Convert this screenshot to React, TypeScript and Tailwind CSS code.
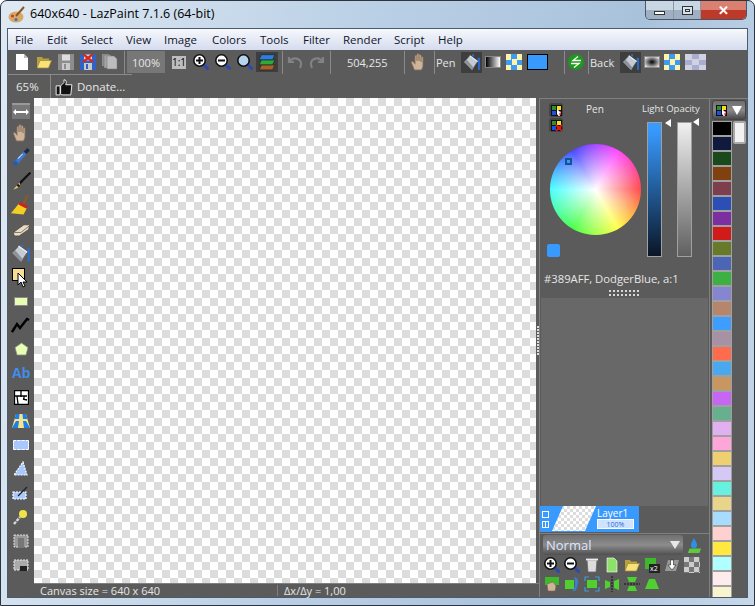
import React from "react";

const font = "font-['Open_Sans','Noto_Sans',sans-serif]";

const palette = [
  "#000000", "#0f1a3d", "#1a4a1c", "#80400f", "#7d3f4d", "#2b4fb5", "#7b2fa0", "#d11a1a",
  "#667a2a", "#4a66b5", "#3cb043", "#8585d1", "#b5866b", "#3d9eff", "#a890a5", "#ff6b4d",
  "#4aa8ee", "#c89660", "#c766f5", "#66b090", "#e0b0f0", "#ffa6d9", "#eed070", "#d5c8f5",
  "#66f0e0", "#e8d48a", "#a8dcff", "#ffd0d0", "#ffe840", "#b0ffff", "#fdebee", "#f8f4d0",
];

const menus = [
  ["File", "w-[32px]"],
  ["Edit", "w-[34px]"],
  ["Select", "w-[45px]"],
  ["View", "w-[38px]"],
  ["Image", "w-[48px]"],
  ["Colors", "w-[48px]"],
  ["Tools", "w-[43px]"],
  ["Filter", "w-[40px]"],
  ["Render", "w-[51px]"],
  ["Script", "w-[44px]"],
  ["Help", "w-[32px]"],
];

function Svg({ children, size = 16, className = "" }: { children: React.ReactNode; size?: number; className?: string }) {
  return (
    <svg width={size} height={size} viewBox="0 0 16 16" className={"shrink-0 " + className}>
      {children}
    </svg>
  );
}

function Sep({ className = "" }: { className?: string }) {
  return <div className={"h-[23px] w-px shrink-0 bg-[#8a8a8a] " + className} />;
}

function NewDoc() {
  return <Svg><path d="M2 0h8l4 4v12H2z" fill="#fff" /><path d="M10 0l4 4h-4z" fill="#bbb" /></Svg>;
}
function Folder() {
  return <Svg><path d="M1 3h5l1 1.500h6V7H4l-2 6H1z" fill="#b8a040" /><path d="M4 6.500h11.500l-3 7.500H1z" fill="#f7e27a" stroke="#a08a30" strokeWidth=".7" /></Svg>;
}
function Save({ crossed = false }: { crossed?: boolean }) {
  const c = crossed ? "#2f62c8" : "#8d8d8d";
  return (
    <Svg>
      <path d="M0 0h16v16H0z" fill={c} />
      <path d="M4 .5h8v6H4z" fill="#ddd" />
      <path d="M4 9h8v7H4z" fill="#c9c9c9" />
      <path d="M6 10h2v5H6z" fill={c} />
      {crossed && <path d="M3 0l10 8M13 0L3 8" stroke="#d6281c" strokeWidth="2.4" />}
    </Svg>
  );
}
function Copy() {
  return <Svg><path d="M0 0h7v12H0z" fill="#8f8f8f" /><path d="M2 1h7v13H2z" fill="#a4a4a4" stroke="#6e6e6e" strokeWidth=".5" /><path d="M5 2h7l3 3v10H5z" fill="#bcbcbc" stroke="#777" strokeWidth=".5" /></Svg>;
}
function Zoom({ sign }: { sign: "+" | "-" | "" }) {
  return (
    <Svg>
      <path d="M11 11l3.500 3.500" stroke="#2c49b0" strokeWidth="3" strokeLinecap="round" />
      <circle cx="6.500" cy="6.500" r="5.700" fill={sign ? "#fff" : "#b8d4ec"} stroke="#111" strokeWidth="1.600" />
      {sign && <path d="M3 6.500h7" stroke="#111" strokeWidth="2" />}
      {sign === "+" && <path d="M6.500 3v7" stroke="#111" strokeWidth="2" />}
    </Svg>
  );
}
function Layers() {
  return (
    <Svg size={18}>
      <path d="M3 10.500h12l-2 4.500H1z" fill="#a8622a" stroke="#222" strokeWidth=".6" />
      <path d="M3 6h12l-2 4.500H1z" fill="#2fa83c" stroke="#222" strokeWidth=".6" />
      <path d="M3 1.500h12L13 6H1z" fill="#2c7fe0" stroke="#222" strokeWidth=".6" />
    </Svg>
  );
}
function Arrow({ flip = false }: { flip?: boolean }) {
  return (
    <Svg className={flip ? "-scale-x-100" : ""}>
      <path d="M2 3v5h5M2.500 8C4 4.500 8 3.500 11 5s4 5 2 9" fill="none" stroke="#828282" strokeWidth="2.200" />
    </Svg>
  );
}
function Hand() {
  return (
    <Svg size={18}>
      <path d="M4 15L1.500 9c-.5-1.500 1-2 1.600-1L4.500 10V3c0-1 1.700-1 1.700 0v4V1.500c0-1 1.800-1 1.800 0V7V2.200c0-1 1.800-1 1.800 0V8V4c0-1 1.700-1 1.700 0v7c0 2-1 3-1.500 4z" fill="#cdb49a" stroke="#8f7660" strokeWidth=".7" />
    </Svg>
  );
}
function Bucket({ size = 18 }: { size?: number }) {
  return (
    <Svg size={size}>
      <path d="M1 8l5-5.500 7 5L8 15z" fill="#c4cbd2" stroke="#555" strokeWidth=".5" />
      <path d="M1 8l7 7 1.500-2-6-7z" fill="#8d949b" />
      <path d="M6 2.500l7 5" stroke="#eef2f6" strokeWidth="1" />
      <path d="M9 3V1.200M13 5h1.200v10" fill="none" stroke="#2a6fd8" strokeWidth="1.600" />
    </Svg>
  );
}
function Checker({ className = "" }: { className?: string }) {
  return <div className={"size-[16px] shrink-0 bg-[repeating-conic-gradient(#3b9bf5_0_25%,#fff3a8_0_50%)] bg-[length:11px_11px] " + className} />;
}
function Button({ children }: { children: React.ReactNode }) {
  return <div className="flex size-[21px] shrink-0 items-center justify-center bg-[#3e3e3e]">{children}</div>;
}
function Swap() {
  return (
    <Svg>
      <circle cx="8" cy="8" r="7.900" fill="#1d9a1d" />
      <path d="M10 2.500L5 6.500h8M6 13.500l5-4H3" fill="none" stroke="#fff" strokeWidth="1.300" />
    </Svg>
  );
}
function Thumb() {
  return (
    <Svg size={18}>
      <path d="M1 7h3.500v8H1z" fill="#111" stroke="#fff" strokeWidth=".8" />
      <path d="M5 7l3-3V1.500c2 0 2.500 2 1.500 4.500H15l-1 9H6l-1-1z" fill="#111" stroke="#fff" strokeWidth=".8" />
    </Svg>
  );
}
function ColorsIcon({ crossed = false }: { crossed?: boolean }) {
  return (
    <svg width="11" height="11" viewBox="0 0 11 11" className="shrink-0">
      <path d="M0 0h11v11H0z" fill="#111" />
      <path d="M1 1h4v4H1z" fill="#2f8f2f" />
      <path d="M6 1h4v4H6z" fill="#f2e020" />
      <path d="M1 6h4v4H1z" fill="#1f4fe0" />
      <path d="M6 6h4v4H6z" fill="#e02020" />
      {crossed && <path d="M5 5l6 6M11 5l-6 6" stroke="#e01515" strokeWidth="1.800" />}
      {!crossed && <path d="M6 4l4 4-2 .5 1 2.500H7.500L6.500 9 6 10z" fill="#fff" />}
    </svg>
  );
}

const Tools = [
  <div key="a" className="flex h-[16px] w-[18px] items-center justify-center border-t-2 border-[#999] bg-[#777]">
    <svg width="16" height="10" viewBox="0 0 16 10"><path d="M0 5l3-3v2h10V2l3 3-3 3V6H3v2z" fill="#fff" /></svg>
  </div>,
  <Hand key="b" />,
  <Svg key="c" size={19}>
    <path d="M3 13L11 4" stroke="#3d78d0" strokeWidth="3.400" />
    <path d="M11 4l3-3" stroke="#1d2a44" strokeWidth="3" />
    <path d="M5 9l4-4" stroke="#bcd4f5" strokeWidth="1" />
    <circle cx="3" cy="13" r="2" fill="#2a5ab0" />
  </Svg>,
  <Svg key="d" size={19}>
    <path d="M15.500 .5L6 10" stroke="#111" strokeWidth="1.800" />
    <path d="M6.500 8.500L1 15l6-2.500z" fill="#e0c070" />
    <path d="M4.500 10.500L6.500 12.500" stroke="#222" strokeWidth="2" />
  </Svg>,
  <Svg key="e" size={20}>
    <path d="M6.500 6.500L0 14.500l10 1 3-5.500z" fill="#f4cf20" />
    <path d="M6.500 6.500l6.500 3.500" stroke="#d02020" strokeWidth="2.400" />
    <path d="M10 7l3.500-7" stroke="#8a5a20" strokeWidth="1.800" />
  </Svg>,
  <Svg key="f" size={19}>
    <path d="M1 10.500L10 4h5l-1 4-8 5.500H2z" fill="#e6dcc8" stroke="#5a5040" strokeWidth=".8" />
    <path d="M1.500 10.500h6L14.500 5" fill="none" stroke="#5a5040" strokeWidth=".6" />
  </Svg>,
  <Bucket key="g" size={20} />,
  <div key="h" className="relative size-[20px]">
    <div className="absolute left-[1px] top-[1px] size-[13px] border border-black bg-[#f8df93]" />
    <svg width="12" height="16" viewBox="0 0 12 16" className="absolute left-[6px] top-[5px]"><path d="M1 1v12l3-3 2 5 2-1-2-4h4z" fill="#fff" stroke="#000" strokeWidth="1" /></svg>
  </div>,
  <div key="i" className="h-[9px] w-[14px] border border-[#888] bg-[#e6ffb3]" />,
  <svg key="j" width="20" height="18" viewBox="0 0 20 18"><path d="M1 16l5-8 3 4 7-9 2 1" fill="none" stroke="#000" strokeWidth="2.400" /></svg>,
  <svg key="k" width="15" height="14" viewBox="0 0 15 14"><path d="M7.500 1L14 5.500 12 13H3L1 5.500z" fill="#e6ffb3" stroke="#888" strokeWidth=".8" /></svg>,
  <span key="l" className="font-['Liberation_Sans',sans-serif] text-[14px] font-bold leading-none text-[#3f8ff0]">Ab</span>,
  <svg key="m" width="15" height="15" viewBox="0 0 15 15"><path d="M0 0h15v15H0z" fill="#fff" /><path d="M.5.500h14v14H.5zM7 1v6M1 6h12M10 6v3M3 6l1 8M9 9l4 1" fill="none" stroke="#000" strokeWidth="1.300" /></svg>,
  <svg key="n" width="20" height="16" viewBox="0 0 20 16"><path d="M5 1h10l4 14H1z" fill="#f4e48a" /><path d="M1 15l4-7h3l-1 7zM19 15l-4-7h-3l1 7zM5 1h3.500l-.5 5H3.500zM11.500 1H15l1.500 5H12z" fill="#1e7fe8" /></svg>,
  <div key="o" className="h-[10px] w-[16px] rounded-[1px] border border-dashed border-white bg-[#a8c8ff]" />,
  <svg key="p" width="16" height="16" viewBox="0 0 16 16"><path d="M10 1l4 13H1z" fill="#a8c8ff" stroke="#fff" strokeWidth="1.200" strokeDasharray="2 1" /></svg>,
  <svg key="q" width="18" height="16" viewBox="0 0 18 16"><path d="M1 7h13v7H1z" fill="#a8c8ff" stroke="#fff" strokeWidth="1.200" strokeDasharray="2 1" /><path d="M6 11l9-9" stroke="#222" strokeWidth="1.300" /></svg>,
  <svg key="r" width="16" height="18" viewBox="0 0 16 18"><path d="M1 16l6-7" stroke="#d8d8d8" strokeWidth="2.400" strokeDasharray="3 1" /><circle cx="10" cy="6" r="4" fill="#f2e24a" /></svg>,
  <svg key="s" width="16" height="17" viewBox="0 0 16 17"><path d="M1 2h14v12H1z" fill="#999" stroke="#ddd" strokeDasharray="2 1" /><path d="M5 5h6v10H5z" fill="#777" /></svg>,
  <svg key="t" width="16" height="13" viewBox="0 0 16 13"><path d="M1 1h14v10H1z" fill="#aaa" stroke="#eee" strokeDasharray="2 1" /><path d="M7 7h7v5H7z" fill="#222" /></svg>,
];

function Grip({ className = "" }: { className?: string }) {
  return (
    <div className={"grid grid-cols-[repeat(8,2px)] gap-x-[2px] gap-y-[2px] " + className}>
      {Array.from({ length: 16 }).map((_, i) => <div key={i} className="size-[2px] bg-[#d8d8d8]" />)}
    </div>
  );
}

export default function App() {
  return (
    <div className={"relative flex h-[606px] w-[755px] flex-col overflow-hidden rounded-t-[7px] border border-[#2c3440] bg-[linear-gradient(100deg,#dfe9f3_0%,#b9cfe5_45%,#a9c2dc_75%,#c6d8ea_100%)] px-[6px] pb-[7px] " + font}>
      <div className="flex h-[27px] shrink-0 items-center">
        <svg width="18" height="18" viewBox="0 0 18 18" className="ml-[1px] shrink-0">
          <ellipse cx="8" cy="11" rx="7.500" ry="5.500" fill="#d9a867" />
          <circle cx="4.500" cy="10" r="1.500" fill="#d8342a" />
          <circle cx="8" cy="13.500" r="1.500" fill="#2f74d0" />
          <path d="M8 10l8-9" stroke="#8a5520" strokeWidth="2" />
        </svg>
        <span className="ml-[4px] whitespace-nowrap text-[12.5px] leading-none text-black">640x640 - LazPaint 7.1.6 (64-bit)</span>
        <div className="ml-auto flex h-[19px] w-[102px] -translate-x-px -translate-y-[4px] overflow-hidden rounded-b-[5px] border border-t-0 border-[#4a5566] text-white">
          <div className="flex w-[28px] items-center justify-center border-r border-[#8896a8] bg-[linear-gradient(#c9d6e4_50%,#9fb0c2_50%)]"><div className="mt-[5px] h-[4px] w-[11px] border border-[#333] bg-white" /></div>
          <div className="flex w-[27px] items-center justify-center border-r border-[#8896a8] bg-[linear-gradient(#c9d6e4_50%,#9fb0c2_50%)]"><div className="h-[9px] w-[11px] border border-[#333] bg-[#d8e2ec] p-[2px]"><div className="size-full border border-[#333]" /></div></div>
          <div className="flex flex-1 items-center justify-center bg-[linear-gradient(#d98070_50%,#bd3a2a_50%)] text-[13px] font-bold leading-none">✕</div>
        </div>
      </div>

      <div className="flex min-h-0 flex-1 flex-col border border-[#4d5a6a] bg-[#5b5b5b]">
        <div className="flex h-[21px] shrink-0 items-center bg-[linear-gradient(#f6f8fc,#d5dcee)] pl-[7px] text-[11.5px] leading-none text-[#10142c]">
          {menus.map(([label, width]) => (
            <span key={label} className={width}>{label}</span>
          ))}
        </div>

        <div className="flex h-[24px] shrink-0 items-center text-[11px] leading-none text-[#e6e6e6]">
          <div className="ml-[6px] flex w-[109px] items-center gap-[6px]">
            <NewDoc />
            <Folder />
            <Save />
            <Save crossed />
            <Copy />
          </div>
          <Sep className="ml-[1px]" />
          <div className="ml-[2px] flex h-[22px] w-[38px] items-center justify-center bg-[#777]">100%</div>
          <div className="ml-[7px] flex h-[13px] w-[14px] items-center justify-center bg-[#bdbdbd] text-[10px] text-black">1:1</div>
          <div className="ml-[7px]"><Zoom sign="+" /></div>
          <div className="ml-[6px]"><Zoom sign="-" /></div>
          <div className="ml-[6px]"><Zoom sign="" /></div>
          <div className="ml-[3px] flex h-[20px] w-[22px] items-center justify-center bg-[#3e3e3e]"><Layers /></div>
          <Sep className="ml-[4px]" />
          <div className="ml-[4px]"><Arrow /></div>
          <div className="ml-[6px]"><Arrow flip /></div>
          <Sep className="ml-[5px]" />
          <span className="ml-[16px] w-[57px]">504,255</span>
          <Sep />
          <div className="ml-[5px]"><Hand /></div>
          <Sep className="ml-[6px]" />
          <span className="ml-[1px] w-[25px]">Pen</span>
          <Button><Bucket /></Button>
          <div className="ml-[3px] h-[12px] w-[16px] border border-[#888] bg-[linear-gradient(90deg,#000,#fff)]" />
          <Checker className="ml-[5px]" />
          <div className="ml-[5px] h-[16px] w-[21px] shrink-0 border border-black bg-[#389aff]" />
          <Sep className="ml-[16px]" />
          <div className="ml-[3px]"><Swap /></div>
          <Sep className="ml-[4px]" />
          <span className="ml-[1px] w-[30px]">Back</span>
          <Button><Bucket /></Button>
          <div className="ml-[3px] h-[12px] w-[16px] border border-[#888] bg-[radial-gradient(#000,#fff)]" />
          <Checker className="ml-[4px]" />
          <div className="ml-[5px] h-[16px] w-[21px] bg-[repeating-conic-gradient(#a9aed0_0_25%,#d0d2e4_0_50%)] bg-[length:14px_11px]" />
        </div>

        <div className="h-px w-[124px] shrink-0 bg-[#8a8a8a]" />
        <div className="flex h-[23px] shrink-0 items-center text-[11.5px] leading-none text-[#e6e6e6]">
          <span className="ml-[8px] w-[34px]">65%</span>
          <Sep />
          <div className="ml-[4px]"><Thumb /></div>
          <span className="ml-[4px]">Donate...</span>
        </div>

        <div className="flex min-h-0 flex-1">
          <div className="flex w-[26px] shrink-0 flex-col pt-[2px]">
            {Tools.map((tool, i) => (
              <div key={i} className={"flex items-center justify-center " + (i === 0 ? "h-[21px]" : "h-[24px]")}>{tool}</div>
            ))}
          </div>

          <div className="flex w-[505px] shrink-0 flex-col">
            <div className="flex min-h-0 flex-1">
              <div className="w-[502px] shrink-0 bg-[repeating-conic-gradient(#dcdcdc_0_25%,#fff_0_50%)] bg-[length:16px_16px]" />
              <div className="flex w-[3px] shrink-0 flex-col items-center justify-center gap-px">
                {Array.from({ length: 10 }).map((_, i) => <div key={i} className="size-[2px] bg-[#ddd]" />)}
              </div>
            </div>
            <div className="flex h-[14px] shrink-0 items-center border-t border-[#808080] text-[11px] leading-none text-[#e6e6e6]">
              <span className="w-[244px] border-r border-[#808080] pl-[6px]">Canvas size = 640 x 640</span>
              <span className="pl-[6px]">Δx/Δy = 1,00</span>
            </div>
          </div>

          <div className="flex w-[170px] shrink-0 flex-col border-l border-t border-[#808080] pb-[5px]">
            <div className="relative h-[199px] shrink-0">
              <div className="absolute left-[9px] top-[4px] flex flex-col gap-[1px]">
                <div className="flex size-[14px] items-center justify-center rounded-[3px] bg-[#444]"><ColorsIcon /></div>
                <div className="flex size-[14px] items-center justify-center rounded-[3px] bg-[#444]"><ColorsIcon crossed /></div>
              </div>
              <span className="absolute left-[46px] top-[4px] text-[10px] leading-[12px] text-[#e6e6e6]">Pen</span>
              <span className="absolute left-[102px] top-[4px] whitespace-nowrap text-[9.5px] leading-[12px] text-[#e6e6e6]">Light Opacity</span>

              <div className="absolute left-[10px] top-[45px] size-[91px] rounded-full bg-[conic-gradient(from_90deg,#ff0000,#ffff00,#00ff00,#00ffff,#0000ff,#ff00ff,#ff0000)]">
                <div className="size-full rounded-full bg-[radial-gradient(circle,#ffffff_0%,#ffffffb0_30%,#ffffff00_100%)]" />
                <div className="absolute left-[15px] top-[14px] size-[7px] border-2 border-[#17548f] bg-[#389aff]" />
              </div>
              <div className="absolute left-[7px] top-[145px] size-[13px] rounded-[2px] bg-[#389aff]" />

              <div className="absolute left-[107px] top-[23px] h-[135px] w-[15px] border border-[#a0a0a0] bg-[linear-gradient(#389aff_5%,#0a1626)]" />
              <div className="absolute left-[125px] top-[20px] size-0 border-y-[4px] border-r-[6px] border-y-transparent border-r-white" />
              <div className="absolute left-[137px] top-[23px] h-[135px] w-[15px] border border-[#a0a0a0] bg-[linear-gradient(#f0f0f0,#606060)]" />
              <div className="absolute left-[153px] top-[19px] size-0 border-y-[4px] border-r-[6px] border-y-transparent border-r-white" />

              <span className="absolute left-[4px] top-[172px] whitespace-nowrap text-[11.25px] leading-[16px] text-[#e6e6e6]">#389AFF, DodgerBlue, a:1</span>
              <Grip className="absolute left-[69px] top-[191px]" />
            </div>

            <div className="ml-[1px] mr-[1px] flex-1 bg-[#686868]" />

            <div className="flex h-[26px] w-[99px] shrink-0 bg-[#389aff]">
              <div className="flex w-[10px] flex-col items-center justify-center gap-[3px] pl-[1px]">
                <div className="size-[7px] border border-white" />
                <div className="size-[7px] border border-white bg-[linear-gradient(#fff,#fff)] bg-[length:1px_100%] bg-center bg-no-repeat" />
              </div>
              <div className="ml-[2px] h-[25px] w-[44px] bg-[repeating-conic-gradient(#dcdcdc_0_25%,#fff_0_50%)] bg-[length:6px_6px] [clip-path:polygon(25%_0,100%_0,75%_100%,0_100%)]" />
              <div className="ml-[1px] flex flex-1 flex-col text-[10px] leading-none text-white">
                <span className="mt-[2px]">Layer1</span>
                <div className="mr-[5px] mt-[1px] flex h-[10px] items-center justify-center border border-white bg-[#cfe2ff] text-[7px] text-[#2a6ad0]">100%</div>
              </div>
            </div>

            <div className="mt-[1px] h-px shrink-0 bg-[#808080]" />
            <div className="mt-[1px] flex h-[20px] shrink-0 items-center">
              <div className="ml-[3px] flex h-[20px] w-[140px] items-center justify-between rounded-[3px] bg-[linear-gradient(#707070,#8c8c8c_50%,#505050)] px-[3px] text-[13px] leading-none text-[#dfe6ff]">
                <span>Normal</span>
                <span className="size-0 border-x-[5px] border-t-[8px] border-x-transparent border-t-[#e8e8e8]" />
              </div>
              <svg width="16" height="20" viewBox="0 0 18 20" className="ml-[3px]"><path d="M4 14h13l-2 5H2z" fill="#5fc83c" /><path d="M9 2c2 4 3.500 6 3.500 8a3.500 3.500 0 01-7 0C5.500 8 7 6 9 2z" fill="#2f8fe8" /></svg>
            </div>
            <div className="ml-[4px] mt-[1px] flex h-[17px] shrink-0 items-center gap-[4px]">
              <Zoom sign="+" />
              <Zoom sign="-" />
              <Svg><path d="M3 3h10l-1 12H4z" fill="#ddd" stroke="#666" strokeWidth=".8" /><path d="M2 2.500h12" stroke="#eee" strokeWidth="1.800" /></Svg>
              <Svg><path d="M3 1h7l3 3v11H3z" fill="#8de06a" stroke="#fff" strokeWidth=".6" /></Svg>
              <Folder />
              <Svg><path d="M1 1h11v11H1z" fill="#3fb82c" /><path d="M5 7h11v9H5z" fill="#222" /><text x="6" y="14" fontSize="7" fill="#fff">x2</text></Svg>
              <Svg><path d="M4 3h11l-3 11H1z" fill="#999" /><path d="M6.500 3h3v5H12l-4 5-4-5h2.500z" fill="#fff" stroke="#222" strokeWidth=".6" /></Svg>
              <div className="size-[16px] bg-[repeating-conic-gradient(#777_0_25%,#ccc_0_50%)] bg-[length:10px_10px]" />
            </div>
            <div className="ml-[4px] mt-[3px] flex h-[16px] shrink-0 items-center gap-[4px]">
              <Svg><path d="M1 1h14v8H1z" fill="#3fb82c" /><path d="M4 15l-1-7 6-2 3 4-1 5z" fill="#cdb49a" stroke="#80674f" strokeWidth=".6" /></Svg>
              <Svg><path d="M1 4h9v9H1z" fill="#4fd030" /><path d="M10 1c4 1 5 4 4 7s-1 5-3 7H8c2-2 3-4 3-7s0-5-1-7z" fill="#3b7fd0" /></Svg>
              <Svg><path d="M3 4h10v8H3z" fill="#4fd030" /><path d="M1 5V1h4M15 5V1h-4M1 11v4h4M15 11v4h-4" fill="none" stroke="#3b9be0" strokeWidth="1.200" /></Svg>
              <Svg><path d="M1 4l5 2v5l-5 2zM15 3l-5 2v7l5 2z" fill="#4fd030" /><path d="M8 0v16" stroke="#111" strokeWidth="1" strokeDasharray="2 1" /></Svg>
              <Svg><path d="M3 1h10l-2 5H5zM5 10h6l2 5H3z" fill="#4fd030" /><path d="M0 8h16" stroke="#111" strokeWidth="1" strokeDasharray="2 1" /></Svg>
              <Svg><path d="M5 3h6l4 10H1z" fill="#4fd030" /></Svg>
            </div>
          </div>

          <div className="flex w-[39px] shrink-0 flex-col border-l border-t border-[#808080] pl-[2px] pt-[1px]">
            <div className="flex h-[20px] w-[34px] shrink-0 items-center justify-between rounded-[3px] border border-[#444] bg-[linear-gradient(#6e6e6e,#8a8a8a_50%,#4a4a4a)] px-[3px]">
              <ColorsIcon />
              <span className="size-0 border-x-[5px] border-t-[9px] border-x-transparent border-t-white" />
            </div>
            <div className="mt-[1px] flex min-h-0 flex-1 overflow-hidden">
              <div className="flex w-[20px] shrink-0 flex-col">
                {palette.map((c) => (
                  <div key={c} className="h-[15px] w-[20px] shrink-0 border border-[#a0a0a0]" style={{ backgroundColor: c }} />
                ))}
              </div>
              <div className="ml-px h-[23px] w-[13px] rounded-[2px] border-2 border-[#aaa] bg-[#f2f2f2]" />
            </div>
          </div>
        </div>
      </div>
    </div>
  );
}
